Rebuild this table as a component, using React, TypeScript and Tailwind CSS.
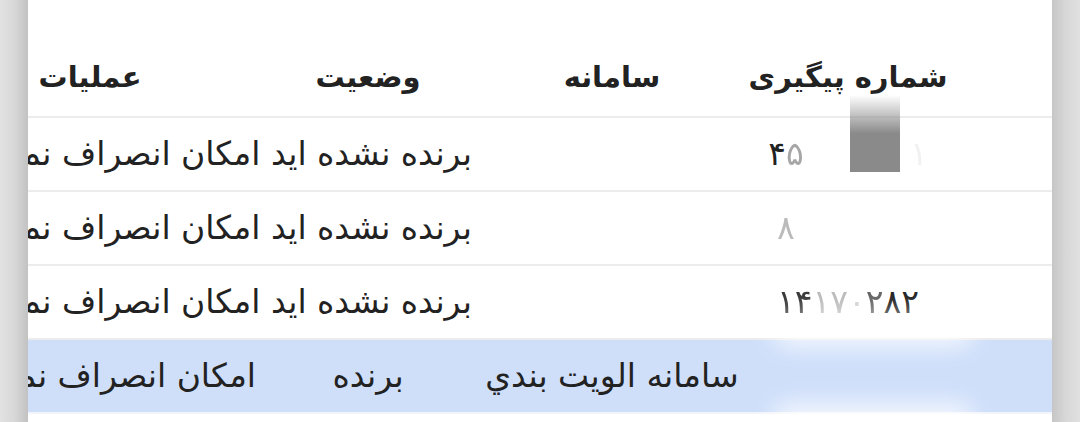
import React from "react";

const font = { fontFamily: '"DejaVu Sans", "Noto Sans", sans-serif' };

// one tracking-number cell, digits split into segments so parts can be faded
const TrackNo = ({ parts }: { parts: { t: string; o: string }[] }) => (
  <span dir="ltr" className="whitespace-nowrap tracking-[1px]">
    {parts.map((p, i) => (
      <span key={i} className={p.o}>
        {p.t}
      </span>
    ))}
  </span>
);

const rows = [
  {
    no: [
      { t: "۴", o: "opacity-100" },
      { t: "۵", o: "opacity-40" },
      { t: "۰۳۲۶۹۰", o: "opacity-0" },
      { t: "۱", o: "opacity-[0.06]" },
    ],
    system: "",
    status: "برنده نشده ايد امكان انصراف نمی باشد",
  },
  {
    no: [
      { t: "۸", o: "opacity-30" },
      { t: "۱۲۶۹۰۳۵", o: "opacity-0" },
    ],
    system: "",
    status: "برنده نشده ايد امكان انصراف نمی باشد",
  },
  {
    no: [
      { t: "۱۴", o: "opacity-90" },
      { t: "۱۷", o: "opacity-30" },
      { t: "۰", o: "opacity-20" },
      { t: "۲", o: "opacity-70" },
      { t: "۸۲", o: "opacity-100" },
    ],
    system: "",
    status: "برنده نشده ايد امكان انصراف نمی باشد",
  },
];

export default function App() {
  return (
    <div className="flex h-[422px] w-[1080px] overflow-hidden bg-[#dcdcdc]" style={font}>
      <div className="w-[28px] shrink-0 bg-gradient-to-r from-[#e2e2e2] via-[#d8d8d8] to-[#c2c2c2]" />

      <div dir="rtl" className="relative flex-1 overflow-hidden bg-white text-[#222]">
        <div className="mt-[40px]">
          {/* header */}
          <div className="grid h-[78px] grid-cols-[208px_264px_224px_332px] items-center border-b-2 border-[#ececec] pr-[100px] text-[29px] font-bold">
            <div className="text-center">شماره پیگیری</div>
            <div className="text-center">سامانه</div>
            <div className="text-center">وضعيت</div>
            <div className="text-center">عمليات</div>
          </div>

          {rows.map((r, i) => (
            <div
              key={i}
              className="grid h-[74px] grid-cols-[208px_264px_224px_332px] items-center border-b-2 border-[#ececec] pr-[100px] text-[33px]"
            >
              <div className="text-center">
                <TrackNo parts={r.no} />
              </div>
              <div className="text-center">{r.system}</div>
              <div className="col-span-2 whitespace-nowrap pr-2 text-right">{r.status}</div>
            </div>
          ))}

          <div className="grid h-[74px] grid-cols-[208px_264px_224px_332px] items-center border-b-2 border-[#f2f5fb] bg-[#cfdffa] pr-[100px] text-[33px]">
            <div />
            <div className="whitespace-nowrap text-center">سامانه الويت بندي</div>
            <div className="text-center">برنده</div>
            <div className="whitespace-nowrap text-right">امكان انصراف نمی باشد</div>
          </div>
        </div>

        {/* redaction marks over the tracking numbers */}
        <div className="absolute left-[822px] top-[95px] h-[77px] w-[50px] bg-gradient-to-b from-[#8a8a8a]/0 via-[#8a8a8a] to-[#8a8a8a]" />
        <div className="absolute left-[745px] top-[316px] h-[30px] w-[200px] rounded-full bg-white/80 blur-md" />
        <div className="absolute left-[745px] top-[404px] h-[30px] w-[200px] rounded-full bg-white/80 blur-md" />
      </div>

      <div className="w-[28px] shrink-0 bg-gradient-to-r from-[#c6c6c6] via-[#d8d8d8] to-[#e0e0e0]" />
    </div>
  );
}
